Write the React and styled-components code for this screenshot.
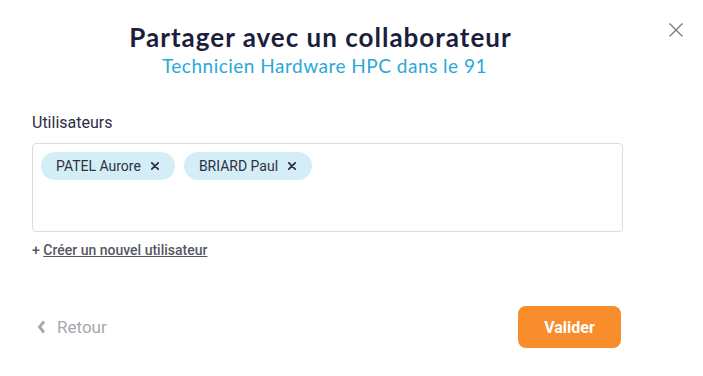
import React, { useState } from 'react';
import styled, { createGlobalStyle } from 'styled-components';

const GlobalStyle = createGlobalStyle`
  html, body {
    margin: 0;
    padding: 0;
    background: #ffffff;
  }
  body {
    font-family: Roboto, "Liberation Sans", Arial, sans-serif;
  }
`;

const Modal = styled.div`
  position: relative;
  width: 703px;
  height: 376px;
  box-sizing: border-box;
  padding: 20px 80px 0 32px;
  background: #fff;
  display: flex;
  flex-direction: column;
`;

const CloseButton = styled.button`
  position: absolute;
  top: 22px;
  right: 19px;
  width: 16px;
  height: 16px;
  padding: 0;
  border: none;
  background: none;
  cursor: pointer;
  display: flex;
`;

const Header = styled.header`
  display: flex;
  flex-direction: column;
  align-items: center;
  padding-right: 14px;
`;

const Title = styled.h1`
  margin: 0;
  font-family: Lato, "Noto Sans", sans-serif;
  font-weight: 700;
  font-size: 26px;
  line-height: 34px;
  letter-spacing: 1px;
  color: #1b1f3b;
`;

const Subtitle = styled.p`
  margin: 0 0 0 8px;
  font-family: Lato, "Noto Sans", sans-serif;
  font-size: 19px;
  line-height: 24px;
  letter-spacing: 0.5px;
  color: #2aa8d8;
`;

const Label = styled.label`
  margin-top: 35px;
  font-size: 16px;
  line-height: 20px;
  color: #2c2e43;
`;

const TagBox = styled.div`
  margin-top: 10px;
  height: 89px;
  box-sizing: border-box;
  border: 1px solid #dcdcdc;
  border-radius: 4px;
  padding: 8px;
  display: flex;
  flex-wrap: wrap;
  align-content: flex-start;
  gap: 9px;
`;

const Chip = styled.span`
  display: inline-flex;
  align-items: center;
  height: 28px;
  padding: 0 16px 0 15px;
  border-radius: 14px;
  background: #d4eef8;
  font-size: 14px;
  color: #2f3142;
  gap: 10px;
`;

const ChipRemove = styled.button`
  border: none;
  background: none;
  padding: 0;
  display: flex;
  cursor: pointer;
`;

const CreateLink = styled.div`
  margin-top: 8px;
  font-size: 14px;
  line-height: 20px;
  font-weight: 500;
  color: #555863;
  a {
    color: inherit;
    text-decoration: underline;
  }
`;

const Footer = styled.footer`
  margin-top: 46px;
  display: flex;
  align-items: center;
  justify-content: space-between;
  padding-left: 5px;
`;

const BackButton = styled.button`
  border: none;
  background: none;
  padding: 0;
  display: flex;
  align-items: center;
  gap: 11px;
  font-family: inherit;
  font-size: 17px;
  color: #a6a7ad;
  cursor: pointer;
`;

const SubmitButton = styled.button`
  width: 103px;
  height: 42px;
  margin-right: 2px;
  border: none;
  border-radius: 8px;
  background: #f78e2b;
  color: #fff;
  font-family: inherit;
  font-size: 16px;
  font-weight: 700;
  cursor: pointer;
`;

function CrossIcon({ size = 8, color = '#2f3142', width = 2.2 }) {
  return (
    <svg width={size} height={size} viewBox="0 0 10 10">
      <path d="M1 1 L9 9 M9 1 L1 9" stroke={color} strokeWidth={width} strokeLinecap="round" />
    </svg>
  );
}

export default function App() {
  const [users, setUsers] = useState(['PATEL Aurore', 'BRIARD Paul']);

  return (
    <>
      <GlobalStyle />
      <Modal>
        <CloseButton aria-label="Fermer">
          <svg width="16" height="16" viewBox="0 0 16 16">
            <path d="M1.5 1.5 L14.5 14.5 M14.5 1.5 L1.5 14.5" stroke="#7d7e85" strokeWidth="1.4" />
          </svg>
        </CloseButton>
        <Header>
          <Title>Partager avec un collaborateur</Title>
          <Subtitle>Technicien Hardware HPC dans le 91</Subtitle>
        </Header>
        <Label>Utilisateurs</Label>
        <TagBox>
          {users.map((u) => (
            <Chip key={u}>
              {u}
              <ChipRemove onClick={() => setUsers(users.filter((x) => x !== u))}>
                <CrossIcon />
              </ChipRemove>
            </Chip>
          ))}
        </TagBox>
        <CreateLink>
          + <a href="#">Créer un nouvel utilisateur</a>
        </CreateLink>
        <Footer>
          <BackButton>
            <svg width="9" height="14" viewBox="0 0 9 14">
              <path d="M7 1.5 L2.5 7 L7 12.5" stroke="#a6a7ad" strokeWidth="2.8" fill="none" />
            </svg>
            Retour
          </BackButton>
          <SubmitButton>Valider</SubmitButton>
        </Footer>
      </Modal>
    </>
  );
}
